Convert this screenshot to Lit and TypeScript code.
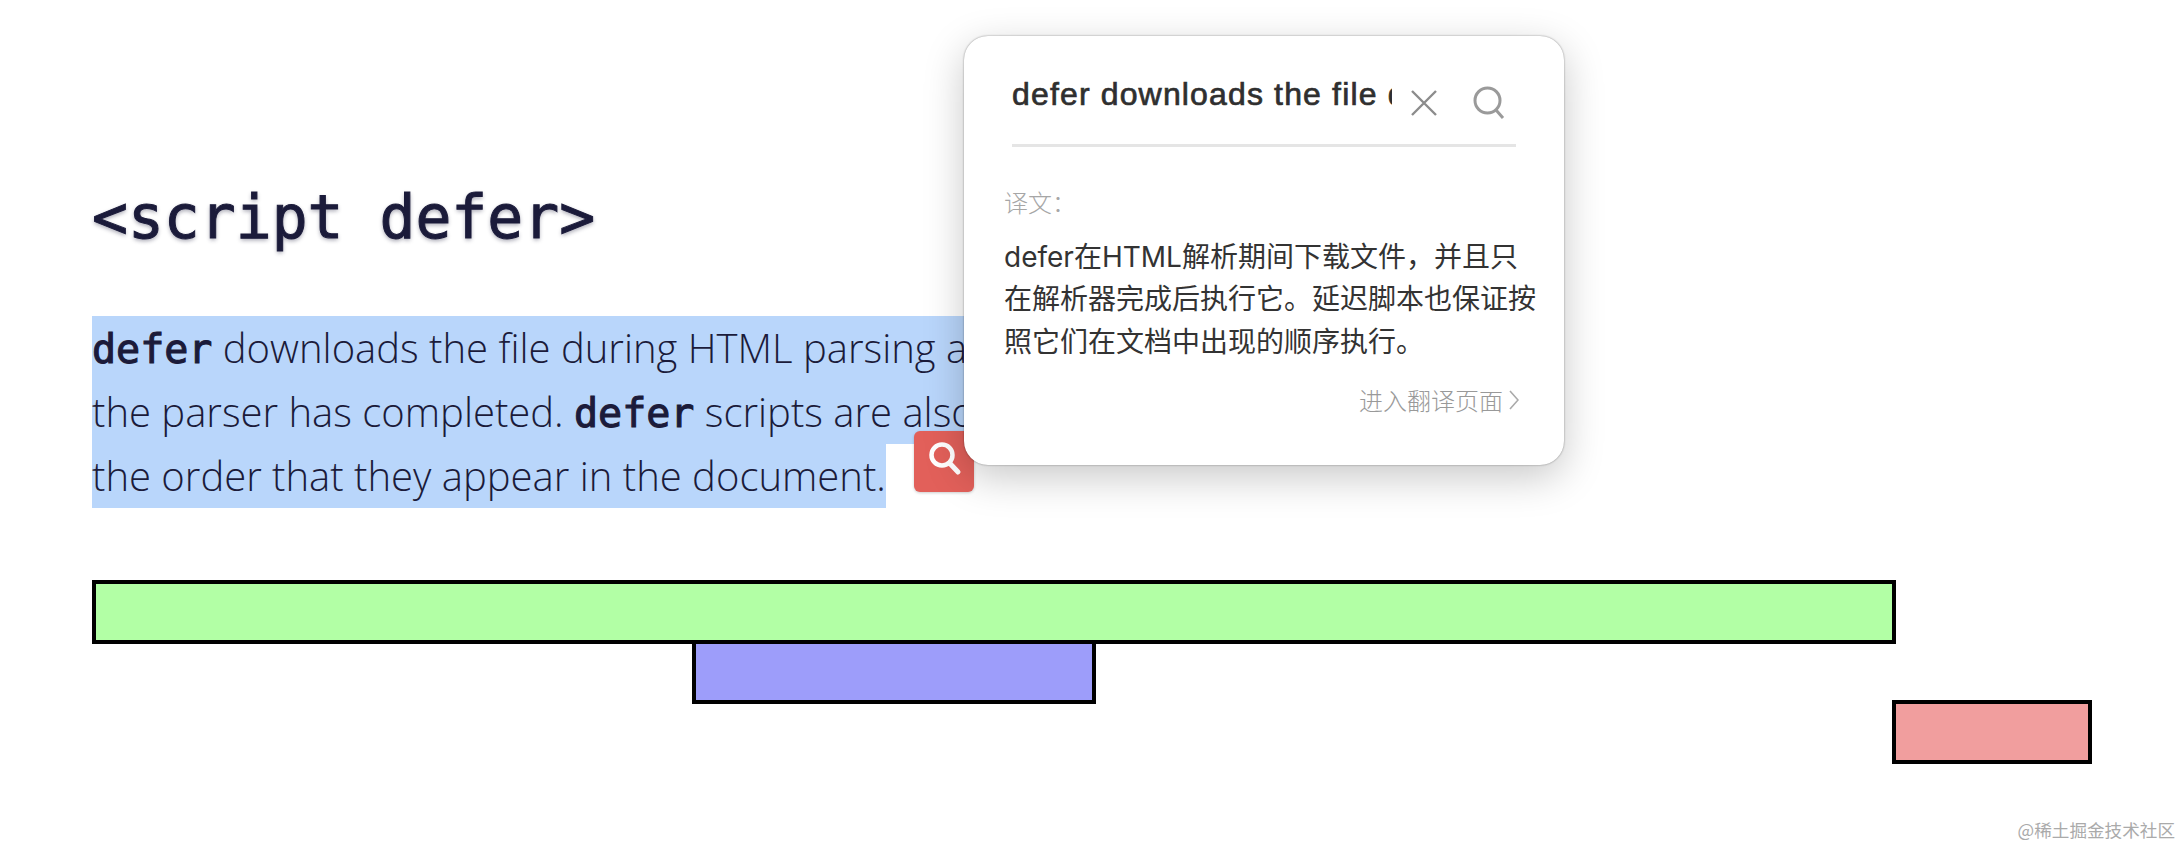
import { LitElement, html, css } from "lit";
import { customElement } from "lit/decorators.js";

const bars = [
  { cls: "green", left: 0, width: 1804 },
  { cls: "purple", left: 600, width: 404 },
  { cls: "pink", left: 1800, width: 200 },
];

@customElement("app-root")
export class AppRoot extends LitElement {
  static styles = css`
    :host {
      display: block;
      position: relative;
      width: 2182px;
      height: 848px;
      overflow: hidden;
      background: #fff;
      color: #1b1b3a;
      font-family: "Open Sans", sans-serif;
    }
    .page {
      display: flex;
      flex-direction: column;
      padding: 178px 0 0 92px;
    }
    h1 {
      margin: 0;
      font-family: "DejaVu Sans Mono", monospace;
      font-size: 59.7px;
      line-height: 80px;
      font-weight: 400;
      -webkit-text-stroke: 1px #1b1b3a;
      text-shadow: 0 2px 4px rgba(27, 27, 58, 0.4);
    }
    .para {
      margin: 58px 0 0;
      font-size: 40px;
      font-weight: 300;
      line-height: 64px;
    }
    .line {
      display: block;
      width: 1000px;
      white-space: nowrap;
      background: #b9d6fb;
    }
    .line.last {
      width: fit-content;
    }
    code {
      font-family: "DejaVu Sans Mono", monospace;
      font-weight: 400;
      -webkit-text-stroke: 1.1px #1b1b3a;
      font-size: 40px;
      line-height: 0;
    }
    .bars {
      margin-top: 72px;
      display: flex;
      flex-direction: column;
    }
    .bar {
      box-sizing: border-box;
      height: 64px;
      border: 4px solid #000;
      margin-bottom: -4px;
    }
    .green { background: #b2ffa5; }
    .purple { background: #9d9dfa; }
    .pink { background: #f19e9e; }

    .fab {
      position: absolute;
      left: 914px;
      top: 431px;
      width: 60px;
      height: 61px;
      border-radius: 6px;
      background: #e2605a;
      box-shadow: 0 1px 3px rgba(0, 0, 0, 0.2);
      display: flex;
      align-items: center;
      justify-content: center;
    }
    .fab svg { margin: -6px 0 0 2px; }

    .card {
      position: absolute;
      left: 964px;
      top: 36px;
      width: 600px;
      height: 429px;
      box-sizing: border-box;
      background: #fff;
      border-radius: 24px;
      box-shadow: 0 0 2px rgba(0, 0, 0, 0.45), 0 12px 40px rgba(0, 0, 0, 0.22);
      padding: 0 28px 0 40px;
      display: flex;
      flex-direction: column;
    }
    .search {
      margin-left: 8px;
      margin-right: 20px;
      height: 111px;
      padding-top: 26px;
      box-sizing: border-box;
      border-bottom: 3px solid #e5e5e5;
      display: flex;
      align-items: center;
    }
    .query {
      width: 380px;
      overflow: hidden;
      white-space: nowrap;
      font-family: "Liberation Sans", sans-serif;
      font-size: 32px;
      letter-spacing: 1.15px;
      -webkit-text-stroke: 0.7px #2f2f2f;
      color: #2f2f2f;
      margin-top: -18px;
    }
    .close { margin-left: 19px; }
    .glass { margin-left: 36px; }
    .label {
      margin-top: 39px;
      font-family: "Noto Sans CJK SC", sans-serif;
      font-size: 24px;
      line-height: 32px;
      color: #a6a6a6;
      font-weight: 300;
    }
    .result {
      margin-top: 18px;
      font-family: "Inter", "Noto Sans CJK SC", sans-serif;
      font-size: 28px;
      line-height: 42.4px;
      color: #333;
    }
    .more {
      margin-top: 20px;
      margin-right: 17px;
      display: flex;
      justify-content: flex-end;
      align-items: center;
      gap: 6px;
      font-family: "Noto Sans CJK SC", sans-serif;
      font-size: 24px;
      line-height: 34px;
      font-weight: 300;
      color: #999;
    }
    .mark {
      position: absolute;
      right: 7px;
      bottom: 7px;
      font-family: "Noto Sans CJK SC", sans-serif;
      font-size: 17.6px;
      line-height: 22px;
      color: #aaa;
    }
  `;

  render() {
    return html`
      <div class="page">
        <h1>&lt;script defer&gt;</h1>
        <p class="para">
          <span class="line"><code>defer</code> downloads the file during HTML parsing and</span>
          <span class="line">the parser has completed. <code>defer</code> scripts are also</span>
          <span class="line last">the order that they appear in the document.</span>
        </p>
        <div class="bars">
          ${bars.map(
            (b) => html`<div
              class="bar ${b.cls}"
              style="margin-left:${b.left}px;width:${b.width}px"
            ></div>`
          )}
        </div>
      </div>

      <div class="fab">
        <svg width="36" height="36" viewBox="0 0 36 36" fill="none" stroke="#fff" stroke-linecap="round">
          <circle cx="15" cy="14" r="10.5" stroke-width="4.5" />
          <path d="M22.5 22 L31 31" stroke-width="5" />
        </svg>
      </div>

      <div class="card">
        <div class="search">
          <div class="query">defer downloads the file during</div>
          <svg class="close" width="26" height="26" viewBox="0 0 26 26" fill="none" stroke="#8c8c8c" stroke-width="2.4">
            <path d="M1 1 L25 25 M25 1 L1 25" />
          </svg>
          <svg class="glass" width="32" height="34" viewBox="0 0 32 34" fill="none" stroke="#9a9a9a" stroke-width="3">
            <circle cx="14.5" cy="14.5" r="12.5" />
            <path d="M23 24 L30 32" />
          </svg>
        </div>
        <div class="label">译文：</div>
        <div class="result">defer在HTML解析期间下载文件，并且只<br />在解析器完成后执行它。延迟脚本也保证按<br />照它们在文档中出现的顺序执行。</div>
        <div class="more">
          进入翻译页面
          <svg width="10" height="20" viewBox="0 0 10 20" fill="none" stroke="#aaa" stroke-width="1.6">
            <path d="M1 1 L9 10 L1 19" />
          </svg>
        </div>
      </div>

      <div class="mark">@稀土掘金技术社区</div>
    `;
  }
}
